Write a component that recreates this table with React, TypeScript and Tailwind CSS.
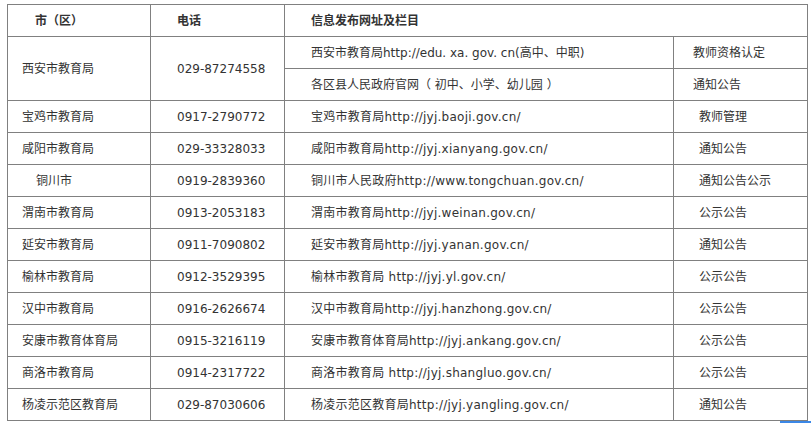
import type { ReactNode } from 'react';

type Row = {
  city: string;
  phone: string;
  site: string;
  column: string;
  indent?: boolean;
};

const rows: Row[] = [
  { city: '宝鸡市教育局', phone: '0917-2790772', site: '宝鸡市教育局http://jyj.baoji.gov.cn/', column: '教师管理' },
  { city: '咸阳市教育局', phone: '029-33328033', site: '咸阳市教育局http://jyj.xianyang.gov.cn/', column: '通知公告' },
  { city: '铜川市', phone: '0919-2839360', site: '铜川市人民政府http://www.tongchuan.gov.cn/', column: '通知公告公示', indent: true },
  { city: '渭南市教育局', phone: '0913-2053183', site: '渭南市教育局http://jyj.weinan.gov.cn/', column: '公示公告' },
  { city: '延安市教育局', phone: '0911-7090802', site: '延安市教育局http://jyj.yanan.gov.cn/', column: '通知公告' },
  { city: '榆林市教育局', phone: '0912-3529395', site: '榆林市教育局 http://jyj.yl.gov.cn/', column: '公示公告' },
  { city: '汉中市教育局', phone: '0916-2626674', site: '汉中市教育局http://jyj.hanzhong.gov.cn/', column: '公示公告' },
  { city: '安康市教育体育局', phone: '0915-3216119', site: '安康市教育体育局http://jyj.ankang.gov.cn/', column: '公示公告' },
  { city: '商洛市教育局', phone: '0914-2317722', site: '商洛市教育局 http://jyj.shangluo.gov.cn/', column: '公示公告' },
  { city: '杨凌示范区教育局', phone: '029-87030606', site: '杨凌示范区教育局http://jyj.yangling.gov.cn/', column: '通知公告' },
];

function Cell({ children, className = '', rowSpan, colSpan }: { children: ReactNode; className?: string; rowSpan?: number; colSpan?: number }) {
  return (
    <td rowSpan={rowSpan} colSpan={colSpan} className={`border border-[#808080] p-0 align-middle whitespace-nowrap ${className}`}>
      {children}
    </td>
  );
}

export default function App() {
  return (
    <div
      className="relative h-[423px] w-[811px] overflow-hidden bg-white pl-[7px] pt-[4px] text-[12px] text-[#333] [text-spacing-trim:space-all]"
      style={{ fontFamily: '"DejaVu Sans", "Noto Sans CJK SC", sans-serif' }}
    >
      <table className="w-[800px] table-fixed border-collapse">
        <colgroup>
          <col className="w-[143px]" />
          <col className="w-[134px]" />
          <col className="w-[389px]" />
          <col className="w-[134px]" />
        </colgroup>
        <tbody>
          <tr className="h-[32px] font-bold">
            <Cell className="pl-[27px]">市（区）</Cell>
            <Cell className="pl-[26px]">电话</Cell>
            <Cell className="pl-[26px]" colSpan={2}>信息发布网址及栏目</Cell>
          </tr>
          <tr className="h-[32px]">
            <Cell rowSpan={2} className="pl-[14px]">西安市教育局</Cell>
            <Cell rowSpan={2} className="pl-[26px]">029-87274558</Cell>
            <Cell className="pl-[26px]">西安市教育局http://edu. xa. gov. cn(高中、中职)</Cell>
            <Cell className="pl-[19px]">教师资格认定</Cell>
          </tr>
          <tr className="h-[32px]">
            <Cell className="pl-[26px]">各区县人民政府官网（ 初中、小学、幼儿园 ）</Cell>
            <Cell className="pl-[19px]">通知公告</Cell>
          </tr>
          {rows.map(r => (
            <tr key={r.city} className="h-[32px]">
              <Cell className={r.indent ? 'pl-[28px]' : 'pl-[14px]'}>{r.city}</Cell>
              <Cell className="pl-[26px]">{r.phone}</Cell>
              <Cell className="pl-[26px] tracking-[0.25px]">{r.site}</Cell>
              <Cell className="pl-[25px]">{r.column}</Cell>
            </tr>
          ))}
        </tbody>
      </table>
      <div className="absolute bottom-0 right-0 h-[2px] w-[31px] bg-[#3b87e6]" />
    </div>
  );
}
